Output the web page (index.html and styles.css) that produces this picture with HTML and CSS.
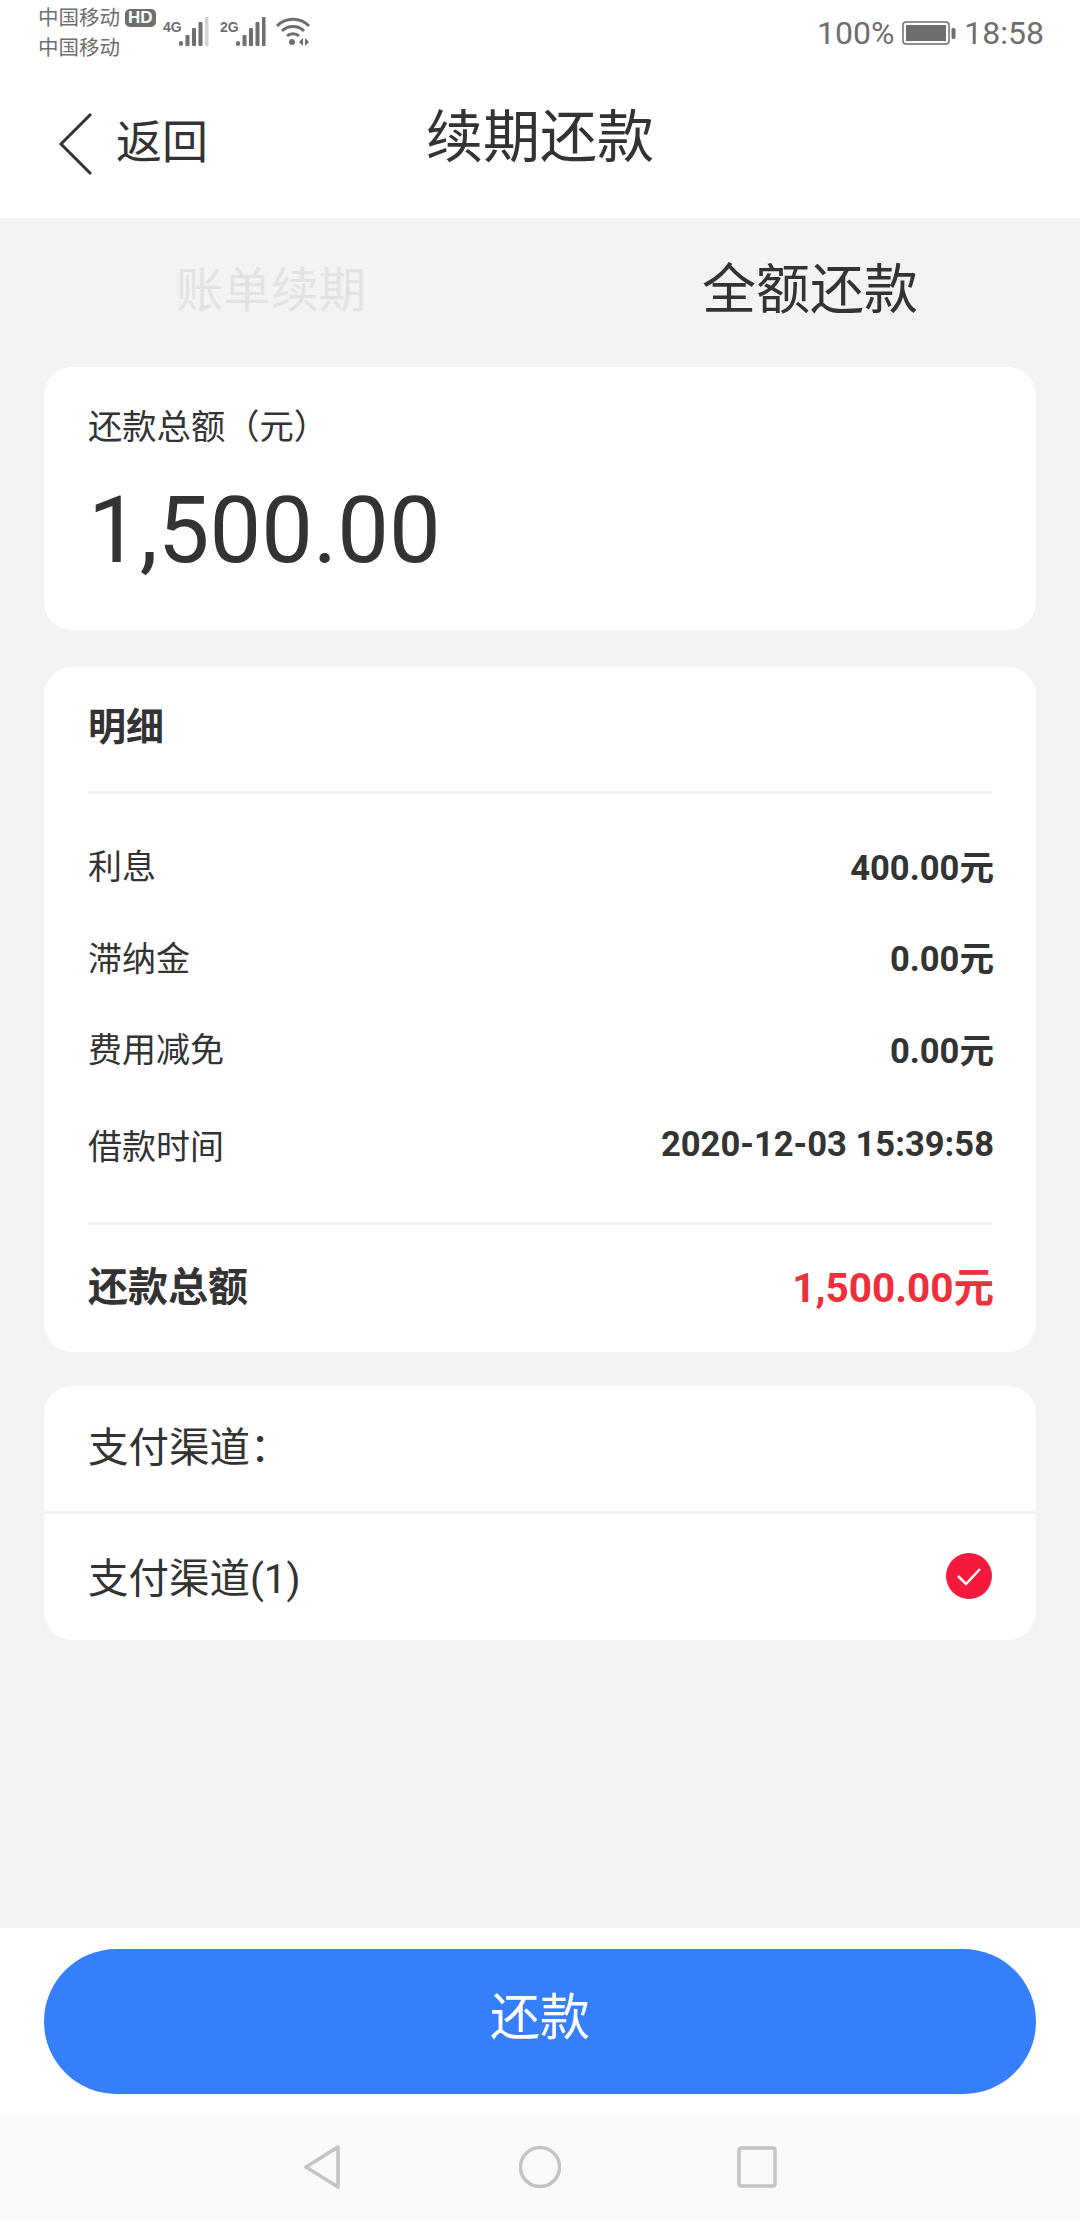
FILE: index.html
```html
<!DOCTYPE html>
<html lang="zh">
<head>
<meta charset="UTF-8">
<title>续期还款</title>
<link rel="stylesheet" href="styles.css">
</head>
<body>
<div class="page">
  <div class="statusbar">
    <div class="carriers">
      <div class="carrier">中国移动<span class="hd">HD</span></div>
      <div class="carrier">中国移动</div>
    </div>
    <div class="signal">
      <span class="net">4G</span>
      <svg class="bars" width="30" height="30" viewBox="0 0 30 30"><g fill="#6e6e6e"><rect x="0" y="24" width="4" height="5" rx="2"/><rect x="6.500" y="18" width="4" height="11" rx="1"/><rect x="13" y="11" width="4" height="18" rx="1"/><rect x="19.500" y="5" width="4" height="24" rx="1" /></g><rect x="26" y="0" width="3.500" height="29" fill="#d4d4d4"/></svg>
      <span class="net net2">2G</span>
      <svg class="bars" width="30" height="30" viewBox="0 0 30 30"><g fill="#6e6e6e"><rect x="0" y="24" width="4" height="5" rx="2"/><rect x="6.500" y="18" width="4" height="11" rx="1"/><rect x="13" y="11" width="4" height="18" rx="1"/><rect x="19.500" y="5" width="4" height="24" rx="1"/><rect x="26" y="0" width="3.500" height="29"/></g></svg>
      <svg class="wifi" width="36" height="30" viewBox="0 0 36 30"><g fill="none" stroke="#6e6e6e" stroke-width="3"><path d="M2 9 C11 0 25 0 34 9"/><path d="M7 14 C13 8 23 8 29 14"/><path d="M12 19 C15 16 21 16 24 19"/></g><circle cx="17" cy="25" r="3" fill="#6e6e6e"/><path d="M28 21 L24 25 L28 29 Z M30 21 L34 25 L30 29 Z" fill="#6e6e6e"/></svg>
    </div>
    <div class="status-right">
      <span>100%</span>
      <svg class="battery" width="54" height="26" viewBox="0 0 54 26"><rect x="1" y="2" width="46" height="22" rx="3" fill="none" stroke="#6e6e6e" stroke-width="1.500"/><rect x="4" y="5" width="40" height="16" fill="#6e6e6e"/><rect x="49.500" y="8" width="4" height="11" rx="1.500" fill="#6e6e6e"/></svg>
      <span>18:58</span>
    </div>
  </div>

  <header class="topbar">
    <div class="back">
      <svg width="36" height="64" viewBox="0 0 36 64"><path d="M33 2 L3 32 L33 62" fill="none" stroke="#333" stroke-width="3"/></svg>
      <span class="back-text">返回</span>
    </div>
    <h1>续期还款</h1>
  </header>

  <main class="content">
    <div class="tabs">
      <div class="tab tab-off">账单续期</div>
      <div class="tab">全额还款</div>
    </div>

    <section class="card total">
      <div class="total-label">还款总额（元）</div>
      <div class="total-num">1,500.00</div>
    </section>

    <section class="card detail">
      <div class="detail-head">明细</div>
      <div class="rows">
        <div class="row"><span>利息</span><b>400.00元</b></div>
        <div class="row"><span>滞纳金</span><b>0.00元</b></div>
        <div class="row"><span>费用减免</span><b>0.00元</b></div>
        <div class="row row-last"><span>借款时间</span><b>2020-12-03 15:39:58</b></div>
      </div>
      <div class="sum"><b>还款总额</b><b class="red">1,500.00元</b></div>
    </section>

    <section class="card pay">
      <div class="pay-head">支付渠道：</div>
      <div class="pay-row">
        <span>支付渠道(1)</span>
        <svg width="46" height="46" viewBox="0 0 46 46"><circle cx="23" cy="23" r="23" fill="#f5193c"/><path d="M12 23 L20 31 L34 16" fill="none" stroke="#fff" stroke-width="2.500"/></svg>
      </div>
    </section>
  </main>

  <div class="footer">
    <button class="pay-btn">还款</button>
  </div>

  <nav class="navbar">
    <svg width="40" height="46" viewBox="0 0 40 46"><path d="M35 3 L3 23 L35 43 Z" fill="none" stroke="#c4c4c4" stroke-width="3.500" stroke-linejoin="round"/></svg>
    <svg width="42" height="44" viewBox="0 0 42 44"><circle cx="21" cy="22" r="19.500" fill="none" stroke="#c4c4c4" stroke-width="3.500"/></svg>
    <svg width="40" height="42" viewBox="0 0 40 42"><rect x="2" y="2" width="36" height="38" rx="2" fill="none" stroke="#c4c4c4" stroke-width="3.500"/></svg>
  </nav>
</div>
</body>
</html>
```

FILE: styles.css
```css
* {
  box-sizing: border-box;
}

html, body {
  margin: 0;
  padding: 0;
}

body {
  font-family: Roboto, "Noto Sans CJK SC", sans-serif;
  color: #333;
  background: #f3f3f3;
}

.page {
  width: 1080px;
  height: 2220px;
  display: flex;
  flex-direction: column;
}

/* status bar */
.statusbar {
  height: 64px;
  background: #fff;
  display: flex;
  align-items: flex-start;
  padding: 3px 36px 0 38px;
  color: #6e6e6e;
}

.carriers {
  width: 125px;
  font-size: 20.500px;
  line-height: 30px;
}

.carrier {
  display: flex;
  align-items: center;
  white-space: nowrap;
}

.hd {
  font-family: "Liberation Sans", sans-serif;
  font-size: 17px;
  font-weight: bold;
  line-height: 18px;
  color: #fff;
  background: #6e6e6e;
  border-radius: 5px;
  padding: 0 3px;
  margin-left: 5px;
}

.signal {
  display: flex;
  align-items: flex-start;
  padding-top: 14px;
  margin-left: 0;
}

.net {
  font-family: "Liberation Sans", sans-serif;
  font-size: 14px;
  line-height: 16px;
  font-weight: bold;
  width: 16px;
  margin-top: 2px;
  white-space: nowrap;
}

.net2 {
  margin-left: 11px;
}

.wifi {
  margin-left: 9px;
}

.status-right {
  margin-left: auto;
  display: flex;
  align-items: center;
  gap: 8px;
  font-size: 32px;
  line-height: 36px;
  padding-top: 12px;
}

/* title */
.topbar {
  height: 154px;
  background: #fff;
  position: relative;
  display: flex;
  align-items: center;
  justify-content: center;
}

.back {
  position: absolute;
  left: 58px;
  top: 41px;
  display: flex;
  align-items: center;
  gap: 22px;
  font-size: 46px;
}

.back-text {
  padding-bottom: 11px;
}

.topbar h1 {
  margin: 0 0 6px;
  font-size: 57px;
  font-weight: 400;
  line-height: 80px;
}

/* main */
.content {
  flex: 1;
  padding: 0 44px;
  display: flex;
  flex-direction: column;
}

.tabs {
  height: 149px;
  display: flex;
  margin: 0 -44px;
}

.tab {
  width: 540px;
  text-align: center;
  font-size: 54px;
  line-height: 146px;
}

.tab-off {
  font-size: 47.500px;
  color: #e2e2e2;
  padding-left: 2px;
}

.card {
  background: #fff;
  border-radius: 28px;
}

.total {
  height: 263px;
  padding: 37px 44px 0;
}

.total-label {
  font-size: 34.300px;
  line-height: 46px;
}

.total-num {
  font-size: 92px;
  line-height: 120px;
  margin-top: 21px;
}

.detail {
  height: 685px;
  margin-top: 37px;
  padding: 0 44px;
}

.detail-head {
  height: 127px;
  border-bottom: 3px solid #f2f2f2;
  font-size: 38px;
  font-weight: bold;
  line-height: 120px;
}

.rows {
  height: 431px;
  border-bottom: 3px solid #f2f2f2;
  padding-top: 25px;
}

.row {
  height: 91.500px;
  display: flex;
  justify-content: space-between;
  align-items: center;
  font-size: 34px;
}

.row b {
  font-size: 34.600px;
  margin-right: -2px;
}

.row-last {
  margin-top: 5px;
}

.sum {
  display: flex;
  justify-content: space-between;
  align-items: center;
  height: 118px;
  font-size: 40px;
}

.red {
  font-size: 40.500px;
  margin-right: -2px;
  color: #ee2f3c;
}

.pay {
  height: 254px;
  margin-top: 34px;
  font-size: 40.500px;
}

.pay-head {
  height: 128px;
  padding: 0 44px 8px;
  border-bottom: 3px solid #f2f2f2;
  display: flex;
  align-items: center;
}

.pay-row {
  height: 126px;
  padding: 0 44px 3px;
  display: flex;
  justify-content: space-between;
  align-items: center;
}

/* bottom */
.footer {
  height: 186px;
  background: #fff;
  padding: 21px 44px;
}

.pay-btn {
  width: 100%;
  height: 145px;
  border: none;
  border-radius: 73px;
  background: #367ffc;
  color: #fff;
  font-family: inherit;
  font-size: 50px;
  padding: 0 0 18px;
}

.navbar {
  height: 106px;
  background: #fafafa;
  display: flex;
  align-items: center;
  justify-content: center;
  gap: 176px;
}
```
